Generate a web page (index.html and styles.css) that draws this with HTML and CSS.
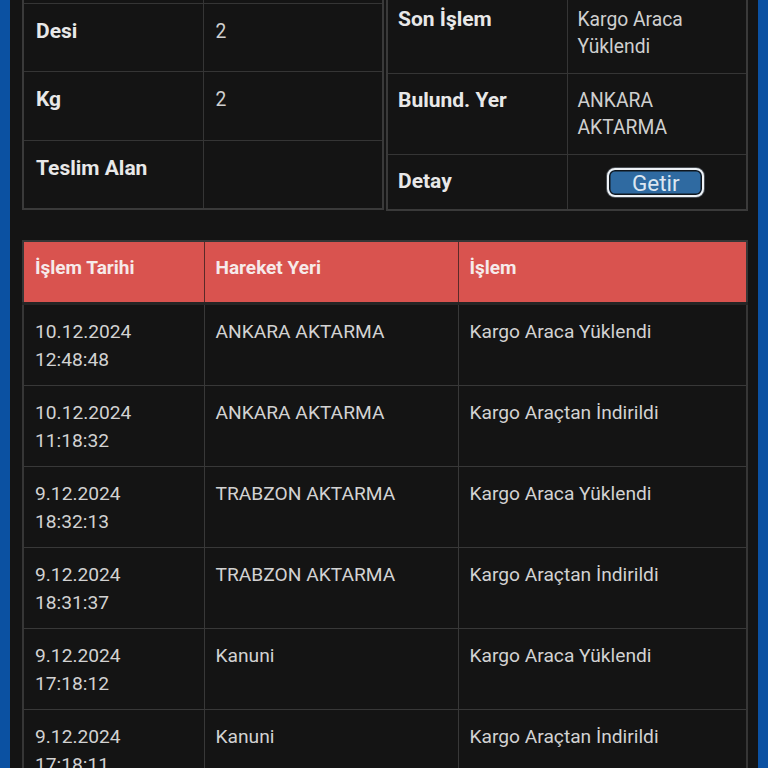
FILE: index.html
```html
<!DOCTYPE html>
<html lang="tr">
<head>
<meta charset="utf-8">
<title>Kargo Takip</title>
<link rel="stylesheet" href="styles.css">
</head>
<body>
<div class="frame">
  <div class="screen">
    <div class="info">
      <table class="kv kv-left">
        <tr class="r-top"><th></th><td></td></tr>
        <tr class="r-one"><th>Desi</th><td>2</td></tr>
        <tr class="r-one"><th>Kg</th><td>2</td></tr>
        <tr class="r-one"><th>Teslim Alan</th><td></td></tr>
      </table>
      <table class="kv kv-right">
        <tr class="r-top2"><th></th><td></td></tr>
        <tr class="r-two"><th>Son İşlem</th><td>Kargo Araca Yüklendi</td></tr>
        <tr class="r-two"><th>Bulund. Yer</th><td>ANKARA AKTARMA</td></tr>
        <tr class="r-btn"><th>Detay</th><td class="btn-cell"><button class="getir">Getir</button></td></tr>
      </table>
    </div>

    <table class="moves">
      <thead>
        <tr><th class="c1">İşlem Tarihi</th><th class="c2">Hareket Yeri</th><th class="c3">İşlem</th></tr>
      </thead>
      <tbody>
        <tr><td>10.12.2024<br>12:48:48</td><td>ANKARA AKTARMA</td><td>Kargo Araca Yüklendi</td></tr>
        <tr><td>10.12.2024<br>11:18:32</td><td>ANKARA AKTARMA</td><td>Kargo Araçtan İndirildi</td></tr>
        <tr><td>9.12.2024<br>18:32:13</td><td>TRABZON AKTARMA</td><td>Kargo Araca Yüklendi</td></tr>
        <tr><td>9.12.2024<br>18:31:37</td><td>TRABZON AKTARMA</td><td>Kargo Araçtan İndirildi</td></tr>
        <tr><td>9.12.2024<br>17:18:12</td><td>Kanuni</td><td>Kargo Araca Yüklendi</td></tr>
        <tr><td>9.12.2024<br>17:18:11</td><td>Kanuni</td><td>Kargo Araçtan İndirildi</td></tr>
        <tr><td>9.12.2024<br>17:10:05</td><td>Kanuni</td><td>Kargo Kabul Edildi</td></tr>
      </tbody>
    </table>
  </div>
</div>
</body>
</html>
```

FILE: styles.css
```css
html, body {
  margin: 0;
  padding: 0;
  height: 100%;
  overflow: hidden;
}

body {
  background: #0b51a2;
  font-family: Roboto, "Noto Sans", "Liberation Sans", sans-serif;
}

.frame {
  margin: 0 10px;
  background: #141414;
  min-height: 100%;
  padding: 0 10px 0 12px;
  overflow: hidden;
}

.screen {
  margin-top: -80px;
}

.info {
  display: flex;
  gap: 2px;
  align-items: flex-start;
}

table {
  border-collapse: collapse;
}

.kv {
  border: 2px solid #3a3a3a;
  table-layout: fixed;
}

.kv-left { width: 362px; }
.kv-right { width: 362px; }

.kv th,
.kv td {
  border: 1px solid #353535;
  vertical-align: top;
  text-align: left;
  padding: 13px 12px 12px;
  line-height: 27px;
  width: 50%;
}

.kv-left th,
.kv-left td {
  padding-top: 14px;
}

.kv-right th,
.kv-right td {
  padding-left: 10px;
}

.kv th {
  font-weight: 700;
  font-size: 21px;
  color: #e8e8e8;
}

.kv td {
  font-weight: 400;
  font-size: 19.3px;
  color: #cfcfcf;
}

.r-top { height: 82px; }
.r-one { height: 68.5px; }
.r-top2 { height: 71px; }
.r-two { height: 81px; }
.r-btn { height: 55px; }

.kv .btn-cell {
  text-align: center;
  padding-top: 13px;
}

.getir {
  width: 97px;
  height: 29px;
  margin: 0;
  padding: 1px 0 0;
  border: 2.5px solid #eef2f6;
  border-radius: 8px;
  background: #2f6aa1;
  box-shadow: inset 0 0 0 1.5px #10161d, 0 0 0 1px #4a4f55;
  color: #dce6f1;
  font-family: Roboto, "Noto Sans", sans-serif;
  font-size: 22.5px;
  line-height: 22px;
  vertical-align: top;
  overflow: hidden;
}

.moves {
  margin-top: 29px;
  width: 726px;
  table-layout: fixed;
  border: 2px solid #363636;
}

.moves th {
  box-sizing: border-box;
}

.moves .c1 { width: 181px; }
.moves .c2 { width: 254px; }

.moves th {
  background: #d9534f;
  color: #f6eaea;
  font-weight: 700;
  font-size: 19px;
  text-align: left;
  vertical-align: top;
  padding: 12px 12px 12px 11px;
  height: 63px;
  line-height: 27px;
  border-right: 1px solid #5a2a28;
  border-bottom: 3px solid #252525;
}

.moves td {
  border: 1px solid #383838;
  color: #d2d2d2;
  font-size: 19.2px;
  font-weight: 400;
  vertical-align: top;
  padding: 13px 12px 11px 11px;
  line-height: 28px;
  height: 56px;
}
```
